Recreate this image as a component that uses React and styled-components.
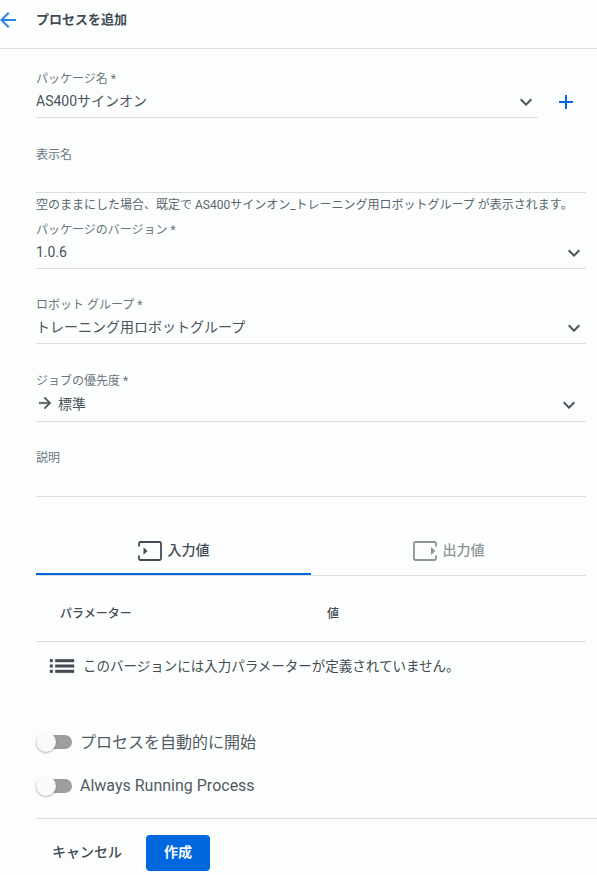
import React from "react";
import styled, { createGlobalStyle } from "styled-components";
import { MdAdd, MdArrowBack, MdArrowForward, MdExpandMore, MdList } from "react-icons/md";

const GlobalStyle = createGlobalStyle`
  * {
    box-sizing: border-box;
  }
  body {
    margin: 0;
    background: #fcfefd;
    color: #424b53;
    font-family: Roboto, "Noto Sans CJK JP", sans-serif;
    font-size: 14px;
  }
  button {
    border: 0;
    padding: 0;
    background: none;
    color: inherit;
    font: inherit;
  }
  svg {
    display: block;
    flex-shrink: 0;
  }
`;

const Page = styled.div`
  width: 597px;
  height: 875px;
  overflow: hidden;
`;

const Header = styled.header`
  display: flex;
  align-items: center;
  height: 49px;
  padding-bottom: 9px;
  border-bottom: 1px solid #dcdddd;
`;
Header.Back = styled.button`
  width: 36px;
  margin-top: 1px;
  color: #2a86e2;
  svg {
    margin-left: -4px;
  }
`;
Header.Title = styled.h1`
  margin: 0;
  font-size: 13px;
  font-weight: 700;
  line-height: 20px;
`;

const Form = styled.form`
  padding-left: 36px;
`;
const Body = styled.div`
  padding-right: 11px;
`;
const PackageRow = styled.div`
  display: flex;
  padding-right: 8px;
`;
const AddButton = styled.button`
  width: 24px;
  height: 24px;
  margin: 41px 0 0 16px;
  color: #0067df;
`;

const Field = styled.div`
  flex: 1;
  padding-top: ${(props) => props.$top}px;
  border-bottom: 1px solid #dcdddd;
`;
Field.Label = styled.label`
  display: block;
  height: 16px;
  color: #6b757e;
  font-size: 12px;
  line-height: 16px;
  white-space: nowrap;
`;
Field.Value = styled.div`
  display: flex;
  align-items: flex-start;
  justify-content: space-between;
  height: ${(props) => props.$height}px;
  margin: ${(props) => props.$gap}px ${(props) => props.$inset || 0}px 0 0;
  color: #4a535b;
  > svg {
    margin-top: ${(props) => props.$arrow}px;
  }
`;
Field.Blank = styled.div`
  height: ${(props) => props.$height}px;
`;
Field.Hint = styled.div`
  height: 29px;
  padding-top: 4px;
  color: #5a656e;
  font-size: 12px;
  line-height: 16px;
  white-space: nowrap;
`;

const Choice = styled.span`
  display: flex;
  align-items: center;
  gap: 4px;
  height: 24px;
  path:not([fill="none"]) {
    stroke: currentColor;
    stroke-width: 0.5px;
  }
`;

const Tabs = styled.div`
  display: flex;
  height: 49px;
  margin-top: 30px;
  border-bottom: 1px solid #dcdddd;
`;
Tabs.Tab = styled.button`
  display: flex;
  flex: 1;
  align-items: center;
  justify-content: center;
  gap: 6px;
  padding-bottom: 2px;
  border-bottom: 2px solid ${(props) => (props.$active ? "#0067df" : "transparent")};
  color: ${(props) => (props.$active ? "#424b53" : "#8d9499")};
  font-weight: 500;
  svg {
    margin-top: 4px;
  }
`;

const Table = styled.div`
  height: 144px;
`;
Table.Head = styled.div`
  display: grid;
  grid-template-columns: 267px 1fr;
  height: 66px;
  padding: 30px 24px 0;
  border-bottom: 1px solid #dcdddd;
  font-size: 12px;
  font-weight: 500;
  line-height: 16px;
`;
Table.Empty = styled.div`
  display: flex;
  align-items: center;
  gap: 5px;
  height: 46px;
  padding-left: 10px;
  font-size: 13.5px;
  svg {
    margin-top: 2px;
  }
  path:not([fill="none"]) {
    stroke: currentColor;
    stroke-width: 0.3px;
  }
`;

const Toggle = styled.div`
  display: flex;
  align-items: center;
  height: 44px;
  font-size: 16px;
  color: #525b63;
`;
Toggle.Track = styled.span`
  display: flex;
  align-items: center;
  width: 36px;
  height: 14px;
  margin-right: 8px;
  border-radius: 7px;
  background: #9e9e9e;
`;
Toggle.Thumb = styled.span`
  width: 20px;
  height: 20px;
  border-radius: 50%;
  background: #fafafa;
  box-shadow: 0 1px 2px rgba(0, 0, 0, 0.3);
`;
Toggle.Label = styled.span`
  padding-bottom: 2px;
`;

const Actions = styled.footer`
  display: flex;
  height: 57px;
  margin-top: 10px;
  padding-top: 16px;
  border-top: 1px solid #dcdddd;
`;
const Button = styled.button`
  width: ${(props) => (props.$primary ? "64px" : "102px")};
  height: 36px;
  margin-right: 8px;
  padding-bottom: 4px;
  border-radius: 4px;
  background: ${(props) => (props.$primary ? "#0067df" : "transparent")};
  color: ${(props) => (props.$primary ? "#f4f8fd" : "inherit")};
  font-weight: ${(props) => (props.$primary ? 700 : 500)};
`;

function InputIcon() {
  return (
    <svg width="24" height="20" viewBox="0 0 24 20">
      <path
        d="M1 5.5V2.5Q1 1 2.5 1H21.5Q23 1 23 2.5V17.5Q23 19 21.5 19H2.5Q1 19 1 17.5V14.5"
        fill="none"
        stroke="currentColor"
        strokeWidth="1.8"
      />
      <path d="M5.5 6.3L9.5 10L5.5 13.7Z" fill="currentColor" />
    </svg>
  );
}

function OutputIcon() {
  return (
    <svg width="24" height="20" viewBox="0 0 24 20">
      <path
        d="M23 5.5V2.5Q23 1 21.5 1H2.5Q1 1 1 2.5V17.5Q1 19 2.5 19H21.5Q23 19 23 17.5V14.5"
        fill="none"
        stroke="currentColor"
        strokeWidth="1.8"
      />
      <path d="M18 6L22.3 10L18 14Z" fill="currentColor" />
    </svg>
  );
}

function SelectField({ label, top, gap = 1, height = 29, arrow = 2, inset, children }) {
  return (
    <Field $top={top}>
      <Field.Label>{label}</Field.Label>
      <Field.Value $gap={gap} $height={height} $arrow={arrow} $inset={inset}>
        <Choice>{children}</Choice>
        <MdExpandMore size={24} />
      </Field.Value>
    </Field>
  );
}

function TextField({ label, top, height }) {
  return (
    <Field $top={top}>
      <Field.Label>{label}</Field.Label>
      <Field.Blank $height={height} />
    </Field>
  );
}

function ToggleRow({ label }) {
  return (
    <Toggle>
      <Toggle.Track>
        <Toggle.Thumb />
      </Toggle.Track>
      <Toggle.Label>{label}</Toggle.Label>
    </Toggle>
  );
}

export default function App() {
  return (
    <Page lang="ja">
      <GlobalStyle />
      <Header>
        <Header.Back type="button" aria-label="戻る">
          <MdArrowBack size={24} />
        </Header.Back>
        <Header.Title>プロセスを追加</Header.Title>
      </Header>
      <Form>
        <Body>
          <PackageRow>
            <SelectField label="パッケージ名 *" top={22}>
              AS400サインオン
            </SelectField>
            <AddButton type="button" aria-label="追加">
              <MdAdd size={24} />
            </AddButton>
          </PackageRow>
          <TextField label="表示名" top={29} height={29} />
          <Field.Hint>
            空のままにした場合、既定で AS400サインオン_トレーニング用ロボットグループ が表示されます。
          </Field.Hint>
          <SelectField label="パッケージのバージョン *" top={0} gap={2} height={28} arrow={1}>
            1.0.6
          </SelectField>
          <SelectField label="ロボット グループ *" top={28}>
            トレーニング用ロボットグループ
          </SelectField>
          <SelectField label="ジョブの優先度 *" top={29} gap={2} height={30} inset={5}>
            <MdArrowForward size={18} />
            標準
          </SelectField>
          <TextField label="説明" top={28} height={30} />
          <Tabs>
            <Tabs.Tab type="button" $active>
              <InputIcon />
              入力値
            </Tabs.Tab>
            <Tabs.Tab type="button">
              <OutputIcon />
              出力値
            </Tabs.Tab>
          </Tabs>
          <Table>
            <Table.Head>
              <span>パラメーター</span>
              <span>値</span>
            </Table.Head>
            <Table.Empty>
              <MdList size={32} />
              このバージョンには入力パラメーターが定義されていません。
            </Table.Empty>
          </Table>
          <ToggleRow label="プロセスを自動的に開始" />
          <ToggleRow label="Always Running Process" />
        </Body>
        <Actions>
          <Button type="button">キャンセル</Button>
          <Button type="button" $primary>
            作成
          </Button>
        </Actions>
      </Form>
    </Page>
  );
}
